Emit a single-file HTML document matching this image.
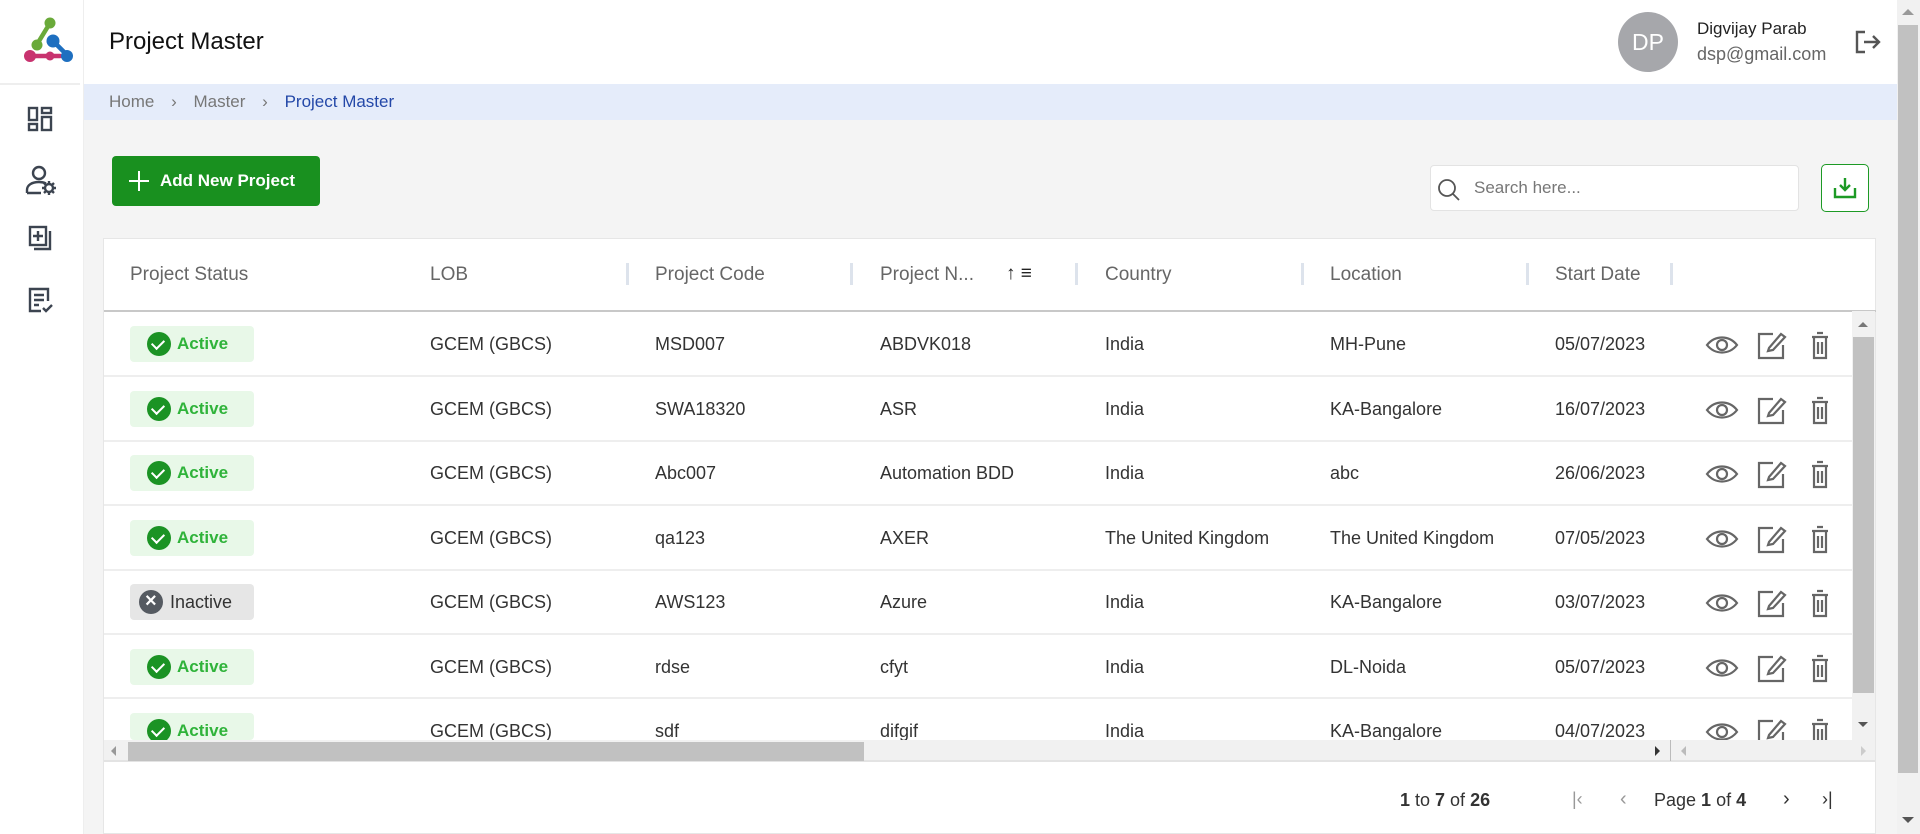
<!DOCTYPE html>
<html><head><meta charset="utf-8"><style>
*{box-sizing:border-box;margin:0;padding:0}
body{width:1920px;height:834px;overflow:hidden;background:#f4f4f4;font-family:"Liberation Sans",sans-serif;position:relative;color:#333}
.abs{position:absolute}
.side{left:0;top:0;width:84px;height:834px;background:#fff;border-right:1px solid #eee}
.hdr{left:84px;top:0;width:1813px;height:84px;background:#fff}
.bc{left:84px;top:84px;width:1813px;height:36px;background:#e5ecfa;font-size:17px;color:#777;line-height:36px;padding-left:25px}
.card{left:103px;top:238px;width:1773px;height:596px;background:#fff;border:1px solid #e6e6e6}
.th{top:264px;font-size:19px;color:#666}
.sep{width:3px;height:22px;background:#dde3ec;top:263px}
.row{left:104px;width:1749px;height:2px;background:#eee}
.td{font-size:18px;color:#333}
.badge{left:130px;width:124px;height:36px;border-radius:4px;background:#e8f8e8;color:#2fb33a;font-weight:bold;font-size:17px;line-height:36px;padding-left:47px}
.badge .ic{position:absolute;left:17px;top:6px;width:24px;height:24px;border-radius:50%;background:#1b9324}
.badge .ic::after{content:"";position:absolute;left:7px;top:5px;width:6px;height:10px;border-right:2.5px solid #fff;border-bottom:2.5px solid #fff;transform:rotate(45deg)}
.badge.in{background:#e6e6e6;color:#333;font-weight:normal;padding-left:40px;font-size:18px}
.badge.in .ic{left:9px;background:#555a61}
.badge.in .ic::after{content:"\00d7";border:0;transform:none;left:6px;top:-7px;width:auto;height:auto;color:#fff;font-size:20px;font-weight:bold}
</style></head><body>
<div class="abs side">
<svg class="abs" style="left:22px;top:17px" width="52" height="46" viewBox="0 0 52 46">
<g stroke-width="4.5" stroke-linecap="round"><line x1="28" y1="6" x2="14" y2="29" stroke="#6aaa3a"/><line x1="30" y1="23" x2="45" y2="38" stroke="#1e6fc0"/><line x1="8" y1="39" x2="38" y2="39" stroke="#c8336f"/></g>
<circle cx="28" cy="6" r="5.5" fill="#6aaa3a"/><circle cx="15" cy="28" r="5.5" fill="#6aaa3a"/><circle cx="31" cy="24" r="6.5" fill="#1e6fc0"/><circle cx="45" cy="39" r="6" fill="#1e6fc0"/><circle cx="8" cy="39" r="6" fill="#c8336f"/><circle cx="28" cy="39" r="4.5" fill="#c8336f"/></svg>
<div class="abs" style="left:0;top:83px;width:80px;height:2px;background:#eee"></div>
<svg class="abs" style="left:27px;top:106px" width="26" height="26" viewBox="0 0 26 26" fill="none" stroke="#3c4450" stroke-width="2.4"><rect x="2" y="2" width="8" height="12"/><rect x="2" y="18" width="8" height="6"/><rect x="15" y="2" width="9" height="5"/><rect x="15" y="11" width="9" height="13"/></svg>
<svg class="abs" style="left:25px;top:165px" width="34" height="32" viewBox="0 0 34 32" fill="none" stroke="#3c4450" stroke-width="2.4"><circle cx="14" cy="8" r="6"/><path d="M2 28v-3c0-5 5-8 12-8 3 0 5 .5 7 1.5M2 28h14"/><circle cx="24" cy="23" r="4"/><path d="M24 16v3M24 27v3M17 23h3M28 23h3M19 18l2 2M27 26l2 2M19 28l2-2M27 20l2-2"/></svg>
<svg class="abs" style="left:28px;top:225px" width="24" height="28" viewBox="0 0 24 28" fill="none" stroke="#3c4450" stroke-width="2.4"><rect x="2" y="2" width="16" height="18"/><path d="M6 24h16V6M10 6v10M5 11h10"/></svg>
<svg class="abs" style="left:27px;top:286px" width="28" height="28" viewBox="0 0 28 28" fill="none" stroke="#3c4450" stroke-width="2.4"><path d="M14 25H3V3h18v12M7 9h10M7 14h10M7 19h5"/><path d="M16 22l3 3 6-6"/></svg>
</div>
<div class="abs hdr">
<div class="abs" style="left:25px;top:28px;font-size:24px;color:#111">Project Master</div>
<div class="abs" style="left:1534px;top:12px;width:60px;height:60px;border-radius:50%;background:#a6a7ab;color:#fff;font-size:23px;text-align:center;line-height:60px">DP</div>
<div class="abs" style="left:1613px;top:19px;font-size:17px;color:#222">Digvijay Parab</div>
<div class="abs" style="left:1613px;top:44px;font-size:18px;color:#666">dsp@gmail.com</div>
<svg class="abs" style="left:1771px;top:30px" width="26" height="24" viewBox="0 0 26 24" fill="none" stroke="#555" stroke-width="2.4"><path d="M10 2H2v20h8M9 12h15M18 6l6 6-6 6"/></svg>
</div>
<div class="abs bc">Home <span style="margin:0 12px">&#8250;</span> Master <span style="margin:0 12px">&#8250;</span> <span style="color:#2448a8">Project Master</span></div>
<div class="abs" style="left:112px;top:156px;width:208px;height:50px;background:#19901f;border-radius:4px;color:#fff;font-weight:bold;font-size:17px;line-height:50px;padding-left:48px">Add New Project
<svg class="abs" style="left:16px;top:14px" width="22" height="22" viewBox="0 0 22 22" stroke="#fff" stroke-width="2"><path d="M11 1v20M1 11h20"/></svg></div>
<div class="abs" style="left:1430px;top:165px;width:369px;height:46px;background:#fff;border:1px solid #e3e3e3;border-radius:4px;font-size:17px;color:#777;line-height:44px;padding-left:43px">Search here...
<svg class="abs" style="left:6px;top:12px" width="24" height="24" viewBox="0 0 24 24" fill="none" stroke="#555" stroke-width="1.8"><circle cx="10" cy="10" r="8"/><path d="M16 16l6 6"/></svg></div>
<div class="abs" style="left:1821px;top:164px;width:48px;height:48px;border:1.5px solid #1d9a25;border-radius:5px;background:#fff">
<svg class="abs" style="left:11px;top:12px" width="24" height="22" viewBox="0 0 24 22" fill="none" stroke="#1d9a25" stroke-width="2.4"><path d="M12 1v12M7 8l5 5 5-5M2 11v9h20v-9"/></svg></div>
<div class="abs card"></div>
<div class="abs th" style="left:130px">Project Status</div>
<div class="abs th" style="left:430px">LOB</div>
<div class="abs th" style="left:655px">Project Code</div>
<div class="abs th" style="left:880px">Project N...</div>
<div class="abs" style="left:1006px;top:263px;font-size:19px;color:#222">&#8593; &#8801;</div>
<div class="abs th" style="left:1105px">Country</div>
<div class="abs th" style="left:1330px">Location</div>
<div class="abs th" style="left:1555px">Start Date</div>
<div class="abs sep" style="left:626px"></div><div class="abs sep" style="left:850px"></div><div class="abs sep" style="left:1075px"></div><div class="abs sep" style="left:1301px"></div><div class="abs sep" style="left:1526px"></div><div class="abs sep" style="left:1670px"></div>
<div class="abs" style="left:104px;top:310px;width:1772px;height:2px;background:#c8c8c8"></div>
<div class="abs row" style="top:375px"></div><div class="abs row" style="top:440px"></div><div class="abs row" style="top:504px"></div><div class="abs row" style="top:569px"></div><div class="abs row" style="top:633px"></div><div class="abs row" style="top:697px"></div>

<div class="abs badge" style="top:326px"><span class="ic"></span>Active</div>
<div class="abs badge" style="top:391px"><span class="ic"></span>Active</div>
<div class="abs badge" style="top:455px"><span class="ic"></span>Active</div>
<div class="abs badge" style="top:520px"><span class="ic"></span>Active</div>
<div class="abs badge in" style="top:584px"><span class="ic"></span>Inactive</div>
<div class="abs badge" style="top:649px"><span class="ic"></span>Active</div>
<div class="abs badge" style="top:713px;height:27px;overflow:hidden"><span class="ic"></span>Active</div>

<div style="position:absolute;left:0;top:0;width:1853px;height:740px;overflow:hidden">
<div class="abs td" style="left:430px;top:334px">GCEM (GBCS)</div><div class="abs td" style="left:655px;top:334px">MSD007</div><div class="abs td" style="left:880px;top:334px">ABDVK018</div><div class="abs td" style="left:1105px;top:334px">India</div><div class="abs td" style="left:1330px;top:334px">MH-Pune</div><div class="abs td" style="left:1555px;top:334px">05/07/2023</div>
<div class="abs td" style="left:430px;top:399px">GCEM (GBCS)</div><div class="abs td" style="left:655px;top:399px">SWA18320</div><div class="abs td" style="left:880px;top:399px">ASR</div><div class="abs td" style="left:1105px;top:399px">India</div><div class="abs td" style="left:1330px;top:399px">KA-Bangalore</div><div class="abs td" style="left:1555px;top:399px">16/07/2023</div>
<div class="abs td" style="left:430px;top:463px">GCEM (GBCS)</div><div class="abs td" style="left:655px;top:463px">Abc007</div><div class="abs td" style="left:880px;top:463px">Automation BDD</div><div class="abs td" style="left:1105px;top:463px">India</div><div class="abs td" style="left:1330px;top:463px">abc</div><div class="abs td" style="left:1555px;top:463px">26/06/2023</div>
<div class="abs td" style="left:430px;top:528px">GCEM (GBCS)</div><div class="abs td" style="left:655px;top:528px">qa123</div><div class="abs td" style="left:880px;top:528px">AXER</div><div class="abs td" style="left:1105px;top:528px;width:198px;overflow:hidden;white-space:nowrap">The United Kingdom</div><div class="abs td" style="left:1330px;top:528px;width:197px;overflow:hidden;white-space:nowrap">The United Kingdom</div><div class="abs td" style="left:1555px;top:528px">07/05/2023</div>
<div class="abs td" style="left:430px;top:592px">GCEM (GBCS)</div><div class="abs td" style="left:655px;top:592px">AWS123</div><div class="abs td" style="left:880px;top:592px">Azure</div><div class="abs td" style="left:1105px;top:592px">India</div><div class="abs td" style="left:1330px;top:592px">KA-Bangalore</div><div class="abs td" style="left:1555px;top:592px">03/07/2023</div>
<div class="abs td" style="left:430px;top:657px">GCEM (GBCS)</div><div class="abs td" style="left:655px;top:657px">rdse</div><div class="abs td" style="left:880px;top:657px">cfyt</div><div class="abs td" style="left:1105px;top:657px">India</div><div class="abs td" style="left:1330px;top:657px">DL-Noida</div><div class="abs td" style="left:1555px;top:657px">05/07/2023</div>
<div class="abs td" style="left:430px;top:721px">GCEM (GBCS)</div><div class="abs td" style="left:655px;top:721px">sdf</div><div class="abs td" style="left:880px;top:721px">difgif</div><div class="abs td" style="left:1105px;top:721px">India</div><div class="abs td" style="left:1330px;top:721px">KA-Bangalore</div><div class="abs td" style="left:1555px;top:721px">04/07/2023</div>
<svg class="abs" style="left:1700px;top:311px" width="130" height="450">
<defs><g id="ac" fill="none" stroke="#666" stroke-width="2.2"><path d="M7 34c8-10 22-10 30 0-8 10-22 10-30 0z"/><circle cx="22" cy="34" r="5"/><path d="M73 23h-14v24h24v-13M69 37l12-14 4 3-12 13-5 1z"/><path d="M112 26h16M117 22h6M114 27v20h12v-20M118 31v12M122 31v12"/></g></defs>
<use href="#ac" y="0"/><use href="#ac" y="65"/><use href="#ac" y="129"/><use href="#ac" y="194"/><use href="#ac" y="258"/><use href="#ac" y="323"/><use href="#ac" y="387"/></svg>
</div>
<div class="abs" style="left:1852px;top:311px;width:23px;height:429px;background:#f1f1f1"></div>
<div class="abs" style="left:1853px;top:337px;width:21px;height:356px;background:#c1c1c1"></div>
<div class="abs" style="left:1858px;top:322px;border-left:5px solid transparent;border-right:5px solid transparent;border-bottom:5px solid #777"></div>
<div class="abs" style="left:1858px;top:722px;border-left:5px solid transparent;border-right:5px solid transparent;border-top:5px solid #555"></div>
<div class="abs" style="left:104px;top:740px;width:1771px;height:22px;background:#f1f1f1;border-bottom:2px solid #e3e3e3"></div>
<div class="abs" style="left:128px;top:742px;width:736px;height:19px;background:#c1c1c1"></div>
<div class="abs" style="left:1670px;top:740px;width:1px;height:21px;background:#bbb"></div>
<div class="abs" style="left:111px;top:746px;border-top:5px solid transparent;border-bottom:5px solid transparent;border-right:5px solid #999"></div>
<div class="abs" style="left:1655px;top:746px;border-top:5px solid transparent;border-bottom:5px solid transparent;border-left:5px solid #333"></div>
<div class="abs" style="left:1681px;top:746px;border-top:5px solid transparent;border-bottom:5px solid transparent;border-right:5px solid #bbb"></div>
<div class="abs" style="left:1861px;top:746px;border-top:5px solid transparent;border-bottom:5px solid transparent;border-left:5px solid #ccc"></div>
<div class="abs" style="left:1400px;top:790px;font-size:18px;color:#333"><b>1</b> to <b>7</b> of <b>26</b></div>
<div class="abs" style="left:1572px;top:789px;font-size:18px;color:#999">|&lsaquo;</div>
<div class="abs" style="left:1620px;top:788px;font-size:20px;color:#999">&lsaquo;</div>
<div class="abs" style="left:1654px;top:790px;font-size:18px;color:#333">Page <b>1</b> of <b>4</b></div>
<div class="abs" style="left:1783px;top:788px;font-size:20px;color:#333">&rsaquo;</div>
<div class="abs" style="left:1822px;top:789px;font-size:18px;color:#333">&rsaquo;|</div>
<div class="abs" style="left:1897px;top:0;width:23px;height:834px;background:#f1f1f1"></div>
<div class="abs" style="left:1898px;top:25px;width:20px;height:748px;background:#c1c1c1"></div>
<div class="abs" style="left:1902px;top:9px;border-left:6px solid transparent;border-right:6px solid transparent;border-bottom:6px solid #999"></div>
<div class="abs" style="left:1902px;top:817px;border-left:6px solid transparent;border-right:6px solid transparent;border-top:6px solid #555"></div>
</body></html>
